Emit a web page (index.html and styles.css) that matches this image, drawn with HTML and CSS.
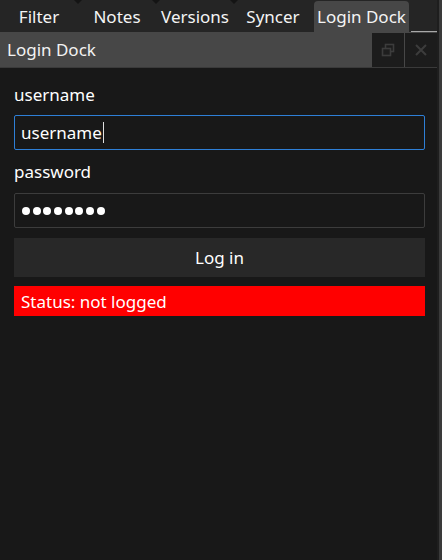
FILE: index.html
```html
<!DOCTYPE html>
<html>
<head>
<meta charset="utf-8">
<link rel="stylesheet" href="styles.css">
</head>
<body>
<div class="window">
  <div class="main">
    <div class="tabbar">
      <div class="tab sep">Filter</div>
      <div class="tab sep">Notes</div>
      <div class="tab sep">Versions</div>
      <div class="tab">Syncer</div>
      <div class="tab active">Login Dock</div>
      <div class="tab-rest"></div>
    </div>
    <div class="titlebar">
      <div class="title">Login Dock</div>
      <div class="tbtn">
        <svg width="14" height="14" viewBox="0 0 14 14"><rect x="4.5" y="1.5" width="8" height="7" fill="none" stroke="#3c3c3c" stroke-width="1.6"/><rect x="1.5" y="5.5" width="8" height="7" fill="#1e1e1e" stroke="#3c3c3c" stroke-width="1.6"/></svg>
      </div>
      <div class="tbtn">
        <svg width="14" height="14" viewBox="0 0 14 14"><path d="M2 2L12 12M12 2L2 12" stroke="#3c3c3c" stroke-width="2"/></svg>
      </div>
    </div>
    <div class="content">
      <div class="label">username</div>
      <div class="input focus"><span>username</span><span class="caret"></span></div>
      <div class="label">password</div>
      <div class="input" aria-label="password"><span class="dot"></span><span class="dot"></span><span class="dot"></span><span class="dot"></span><span class="dot"></span><span class="dot"></span><span class="dot"></span><span class="dot"></span></div>
      <div class="button">Log in</div>
      <div class="status">Status: not logged</div>
    </div>
  </div>
  <div class="edge"></div>
</div>
</body>
</html>
```

FILE: styles.css
```css
html, body {
  margin: 0;
  padding: 0;
}
body {
  background: #181818;
  font-family: "Noto Sans", "Open Sans", sans-serif;
  font-size: 17px;
  color: #ffffff;
  width: 442px;
  height: 560px;
  overflow: hidden;
}
.window {
  display: flex;
  height: 560px;
}
.main {
  flex: 1;
  display: flex;
  flex-direction: column;
  min-width: 0;
}
.edge {
  width: 5px;
  background: linear-gradient(to right, #1e1e1e 0 2px, #3a3a3a 2px 5px);
}
.tabbar {
  height: 32px;
  background: #252525;
  display: flex;
  align-items: flex-end;
}
.tab {
  position: relative;
  min-width: 78px;
  box-sizing: border-box;
  height: 32px;
  padding: 0 3px;
  display: flex;
  align-items: center;
  justify-content: center;
  color: #f4f4f4;
}
.tab.sep::after {
  content: "";
  position: absolute;
  right: -4px;
  top: 0;
  border-left: 4px solid transparent;
  border-right: 4px solid transparent;
  border-top: 4px solid #141414;
}
.tab.active {
  min-width: 0;
  height: 31px;
  margin-left: 2px;
  background: #474747;
  border-radius: 4px 4px 0 0;
  padding: 0 3px 1px;
}
.tab-rest {
  flex: 1;
  height: 32px;
  margin-left: 2px;
  box-sizing: border-box;
  border-bottom: 1px solid #a8a8a8;
}
.titlebar {
  height: 36px;
  background: #474747;
  display: flex;
  align-items: center;
  border-bottom: 1px solid #3a3a3a;
  box-sizing: border-box;
  padding: 1px 0;
}
.title {
  flex: 1;
  padding-left: 7px;
  color: #f2f2f2;
}
.tbtn {
  width: 32px;
  height: 34px;
  margin-left: 1px;
  background: #1c1c1c;
  display: flex;
  align-items: center;
  justify-content: center;
}
.content {
  flex: 1;
  padding: 0 12px 0 14px;
  display: flex;
  flex-direction: column;
}
.label {
  height: 47px;
  line-height: 20px;
  padding-top: 17px;
  box-sizing: border-box;
}
.input {
  height: 35px;
  box-sizing: border-box;
  border: 1px solid #3c3c3c;
  border-radius: 2px;
  display: flex;
  align-items: center;
  padding-left: 6px;
}
.input.focus {
  border-color: #2e7fd6;
}
.caret {
  width: 1px;
  height: 21px;
  background: #e0e0e0;
  margin-left: 1px;
}
.dot {
  width: 8px;
  height: 8px;
  border-radius: 50%;
  background: #ffffff;
  margin-right: 2.7px;
}
.dot:first-child {
  margin-left: 1px;
}
.content .input + .label {
  height: 43px;
  padding-top: 12px;
}
.button {
  margin-top: 10px;
  height: 39px;
  background: #282828;
  display: flex;
  align-items: center;
  justify-content: center;
}
.status {
  margin-top: 9px;
  height: 30px;
  background: #ff0000;
  display: flex;
  align-items: center;
  padding-left: 7px;
}
```
